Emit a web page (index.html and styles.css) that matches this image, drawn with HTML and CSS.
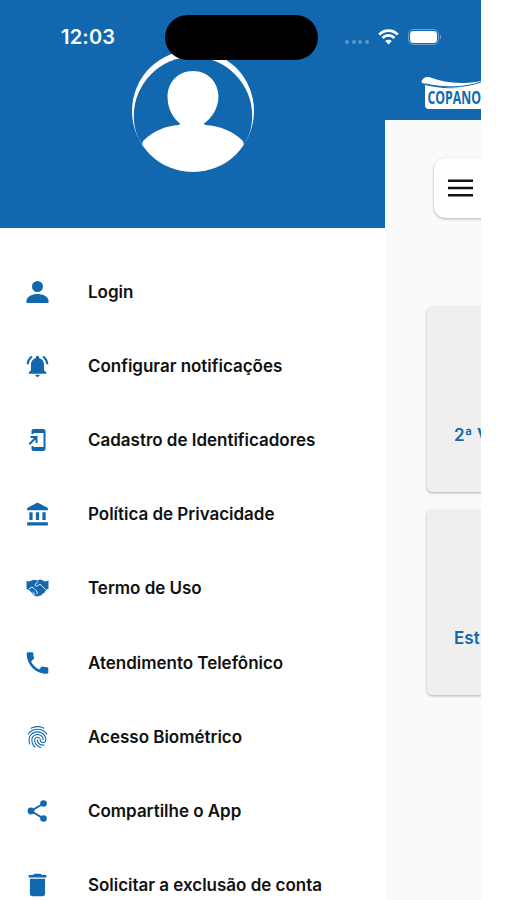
FILE: index.html
```html
<!DOCTYPE html>
<html lang="pt-BR">
<head>
    <meta charset="UTF-8">
    <title>Menu</title>
    <link rel="stylesheet" href="styles.css">
</head>
<body>
    <div class="phone">
        <!-- Drawer -->
        <aside class="drawer">
            <header class="drawer-header">
                <svg class="avatar" viewBox="0 0 124 124">
                    <defs>
                        <clipPath id="avatar-clip"><circle cx="62" cy="62" r="61"/></clipPath>
                    </defs>
                    <circle cx="62" cy="62" r="61" fill="#fff"/>
                    <circle cx="62" cy="67" r="59.200" fill="#1168ae" clip-path="url(#avatar-clip)"/>
                    <g fill="#fff" clip-path="url(#avatar-clip)">
                        <path d="M62 22 C77 22 87 33 87.500 47 C87.500 59 81 69 73 74.500 L74 76 C89 77 102 82 112 92 L118 124 H4 L12 92 C22 82 34 77 48 76 L49 74.500 C41 68 36.500 59 36.500 47 C37 33 47 22 62 22 Z"/>
                    </g>
                </svg>
            </header>
            <nav class="menu">
                <a class="menu-item">
                    <svg class="icon" viewBox="0 0 24 24"><circle cx="12" cy="6.500" r="5.500"/><path d="M1 23v-2.200C1 16.500 7 14 12 14s11 2.500 11 6.800V23z"/></svg>
                    <span>Login</span>
                </a>
                <a class="menu-item">
                    <svg class="icon" viewBox="1 1 22 22"><path d="M7.580 4.080L6.150 2.650C3.750 4.480 2.170 7.300 2.030 10.500h2c.15-2.650 1.510-4.970 3.550-6.420zm12.390 6.420h2c-.15-3.200-1.730-6.020-4.120-7.850l-1.420 1.430c2.020 1.450 3.390 3.770 3.540 6.420zM18 11c0-3.070-1.640-5.640-4.500-6.320V4c0-.83-.67-1.500-1.500-1.500s-1.500.67-1.500 1.500v.68C7.630 5.360 6 7.920 6 11v5l-2 2v1h16v-1l-2-2v-5zm-6 11c.14 0 .27-.01.4-.04.65-.14 1.180-.58 1.440-1.180.1-.24.15-.5.15-.78h-4c.01 1.100.9 2 2.010 2z"/></svg>
                    <span>Configurar notificações</span>
                </a>
                <a class="menu-item">
                    <svg class="icon" viewBox="0 0 24 24"><path d="M18 1.010L8 1c-1.100 0-2 .9-2 2v3h2V5h10v14H8v-1H6v3c0 1.100.9 2 2 2h10c1.100 0 2-.9 2-2V3c0-1.100-.9-1.990-2-1.990zM10 15h2V8H5v2h3.590L3 15.590 4.410 17 10 11.410V15z"/></svg>
                    <span>Cadastro de Identificadores</span>
                </a>
                <a class="menu-item">
                    <svg class="icon" viewBox="0.500 0.500 22 22"><path d="M4 10v7h3v-7H4zm6 0v7h3v-7h-3zM2 22h19v-3H2v3zm14-12v7h3v-7h-3zm-4.500-9L2 6v2h19V6l-9.500-5z"/></svg>
                    <span>Política de Privacidade</span>
                </a>
                <a class="menu-item">
                    <svg class="icon" viewBox="0 0 24 24">
                        <path d="M1 5l2.500.6L8 3.800l3.800.6 3-.8 5 1.800L23 4.500v8.300l-2.300.7-1.500 3-2.200 1.200-1.500 1.800-2 .3L12 20.500 9.500 20 5 15.500l-1.800-2H1z"/>
                        <path class="cut" d="M12.500 5.500L9.300 9c.8 1.800 2.700 1.500 5.200-1l5.500 5.500M3.500 13l3-2 2 1.500 2.500 2.500 1 3M7 16l3 2.500"/>
                    </svg>
                    <span>Termo de Uso</span>
                </a>
                <a class="menu-item">
                    <svg class="icon" viewBox="2 2 20 20"><path d="M6.620 10.790c1.440 2.830 3.760 5.140 6.590 6.590l2.200-2.200c.27-.27.67-.36 1.020-.24 1.120.37 2.330.57 3.570.57.55 0 1 .45 1 1V20c0 .55-.45 1-1 1-9.390 0-17-7.610-17-17 0-.55.45-1 1-1h3.500c.55 0 1 .45 1 1 0 1.250.2 2.450.57 3.570.11.35.03.74-.25 1.020l-2.200 2.200z"/></svg>
                    <span>Atendimento Telefônico</span>
                </a>
                <a class="menu-item">
                    <svg class="icon" viewBox="1 1 22 22"><path d="M17.810 4.470c-.08 0-.16-.02-.23-.06C15.660 3.420 14 3 12.010 3c-1.980 0-3.860.47-5.570 1.410-.24.13-.54.04-.68-.2-.13-.24-.04-.55.2-.68C7.820 2.520 9.860 2 12.010 2c2.130 0 3.990.47 6.030 1.520.25.13.34.43.21.67-.09.18-.26.28-.44.28zM3.500 9.720c-.1 0-.2-.03-.29-.09-.23-.16-.28-.47-.12-.7.99-1.400 2.250-2.500 3.750-3.270C9.980 4.040 14 4.030 17.150 5.650c1.500.77 2.760 1.860 3.750 3.250.16.22.11.54-.12.7-.23.16-.54.11-.7-.12-.9-1.260-2.040-2.250-3.390-2.940-2.870-1.470-6.540-1.470-9.400.01-1.360.7-2.500 1.700-3.400 2.960-.08.14-.23.21-.39.21zm6.250 12.070c-.13 0-.26-.05-.35-.15-.87-.87-1.340-1.430-2.010-2.640-.69-1.230-1.050-2.730-1.050-4.340 0-2.970 2.540-5.390 5.660-5.390s5.660 2.420 5.660 5.390c0 .28-.22.5-.5.5s-.5-.22-.5-.5c0-2.420-2.090-4.390-4.660-4.390-2.570 0-4.660 1.970-4.660 4.390 0 1.440.32 2.770.93 3.850.64 1.150 1.080 1.640 1.850 2.420.19.2.19.51 0 .71-.11.1-.24.15-.37.15zm7.170-1.850c-1.190 0-2.240-.3-3.100-.89-1.490-1.010-2.380-2.650-2.380-4.390 0-.28.22-.5.5-.5s.5.22.5.5c0 1.410.72 2.740 1.940 3.560.71.48 1.540.71 2.540.71.24 0 .64-.03 1.040-.1.27-.05.53.13.58.41.05.27-.13.53-.41.58-.57.11-1.070.12-1.210.12zM14.910 22c-.04 0-.09-.01-.13-.02-1.590-.44-2.630-1.030-3.720-2.100-1.400-1.390-2.170-3.240-2.170-5.220 0-1.620 1.380-2.940 3.080-2.940 1.700 0 3.080 1.320 3.080 2.940 0 1.070.93 1.940 2.080 1.940s2.080-.87 2.080-1.940c0-3.770-3.250-6.830-7.250-6.830-2.840 0-5.440 1.580-6.610 4.030-.39.81-.59 1.760-.59 2.800 0 .78.07 2.010.67 3.610.1.26-.03.55-.29.64-.26.1-.55-.04-.64-.29-.49-1.310-.73-2.610-.73-3.960 0-1.200.23-2.290.68-3.240 1.330-2.790 4.280-4.600 7.510-4.600 4.550 0 8.250 3.510 8.250 7.830 0 1.620-1.380 2.940-3.080 2.940s-3.080-1.320-3.080-2.940c0-1.070-.93-1.940-2.080-1.940s-2.080.87-2.080 1.940c0 1.710.66 3.310 1.870 4.510.95.94 1.860 1.460 3.270 1.850.27.07.42.35.35.61-.05.23-.26.38-.47.38z"/></svg>
                    <span>Acesso Biométrico</span>
                </a>
                <a class="menu-item">
                    <svg class="icon" viewBox="0 0 24 24">
                        <path class="link" d="M18 4.500L5.500 12L18 19.500"/>
                        <circle cx="18" cy="4.500" r="3.300"/>
                        <circle cx="5.500" cy="12" r="3.400"/>
                        <circle cx="18" cy="19.500" r="3.300"/>
                    </svg>
                    <span>Compartilhe o App</span>
                </a>
                <a class="menu-item">
                    <svg class="icon" viewBox="2.500 2.500 19 19"><path d="M6 19c0 1.100.9 2 2 2h8c1.100 0 2-.9 2-2V7H6v12zM19 4h-3.500l-1-1h-5l-1 1H5v2h14V4z"/></svg>
                    <span>Solicitar a exclusão de conta</span>
                </a>
            </nav>
        </aside>

        <!-- Page behind the drawer -->
        <main class="page">
            <header class="page-header">
                <svg class="logo" viewBox="0 0 80 36">
                    <path d="M.5 6.500 C1 2.500 4 .5 8 1 C24 7 42 9 62 4.500 V10 C42 14 20 11 4 8z" fill="#fff"/>
                    <path d="M4 9 C20 13 42 14 62 7 V33 H8 Q4 33 4 29z" fill="#fff"/>
                    <path d="M4 7.800 C22 12 42 12.500 62 5.500" fill="none" stroke="#1168ae" stroke-width="1"/>
                    <text x="6.500" y="28" textLength="53.500" lengthAdjust="spacingAndGlyphs">COPANO</text>
                </svg>
            </header>
            <div class="toolbar">
                <svg class="burger" viewBox="0 0 25 18"><path d="M0 1.700H25M0 9H25M0 16.300H25"/></svg>
            </div>
            <div class="card"><span>2ª V</span></div>
            <div class="card"><span>Est</span></div>
        </main>

        <!-- Status bar -->
        <div class="status-bar">
            <span class="time">12:03</span>
            <span class="island"></span>
            <span class="signal"><i></i><i></i><i></i><i></i></span>
            <svg class="wifi" viewBox="0 0 22 16">
                <path d="M1.300 5.500 A13.500 13.500 0 0 1 20.700 5.500 M4.800 9 A8.500 8.500 0 0 1 17.200 9" fill="none" stroke="#fff" stroke-width="2.900"/>
                <path d="M11 15.800 L7.500 12.300 A5 5 0 0 1 14.500 12.300 Z" fill="#fff"/>
            </svg>
            <svg class="battery" viewBox="0 0 34 16">
                <rect x="0.500" y="0.500" width="30" height="15" rx="5" fill="none" stroke="#6fa4ce"/>
                <rect x="2" y="2" width="27" height="12" rx="3.500" fill="#fff"/>
                <path d="M32 5.500 Q34.500 8 32 10.500z" fill="#6fa4ce"/>
            </svg>
        </div>
    </div>
</body>
</html>
```
FILE: styles.css
```css
body {
    margin: 0;
    background: #fff;
    font-family: Inter, "Liberation Sans", sans-serif;
    overflow: hidden;
}
.phone {
    position: relative;
    display: flex;
    width: 481px;
    height: 900px;
    overflow: hidden;
}
.drawer {
    flex: none;
    width: 385px;
    background: #fff;
}
.drawer-header {
    display: flex;
    justify-content: center;
    align-items: flex-start;
    box-sizing: border-box;
    height: 228px;
    padding-top: 49px;
    background: #1168ae;
}
.avatar {
    width: 124px;
    height: 124px;
}
.menu {
    display: flex;
    flex-direction: column;
    padding: 27px 0 0 25px;
}
.menu-item {
    display: flex;
    align-items: center;
    flex: none;
    gap: 38px;
    height: 74.1px;
    color: #111;
    font-size: 17px;
    font-weight: 600;
    letter-spacing: -0.02px;
    white-space: nowrap;
}
.icon {
    width: 25px;
    height: 24px;
    fill: #1168ae;
}
.icon .cut {
    fill: none;
    stroke: #fff;
    stroke-width: 0.9;
}
.icon .link {
    fill: none;
    stroke: #1168ae;
    stroke-width: 2;
}
.page {
    flex: 1;
    min-width: 0;
    overflow: hidden;
    background: #fafafa;
}
.page-header {
    box-sizing: border-box;
    height: 120px;
    padding: 76px 0 0 36px;
    background: #1168ae;
}
.logo {
    display: block;
    width: 80px;
    height: 36px;
}
.logo text {
    fill: #1168ae;
    font: 700 17px "Open Sans", sans-serif;
}
.toolbar {
    display: flex;
    align-items: center;
    box-sizing: border-box;
    width: 400px;
    height: 60px;
    margin: 38px 0 89px 49px;
    padding: 0 0 1px 14px;
    border-radius: 12px;
    background: #fff;
    box-shadow: 0 1px 3px rgba(0, 0, 0, 0.3);
}
.burger {
    width: 25px;
    height: 18px;
    stroke: #111;
    stroke-width: 2.5;
}
.card {
    display: flex;
    align-items: flex-end;
    box-sizing: border-box;
    width: 180px;
    height: 185px;
    margin: 0 0 18px 42px;
    padding: 0 0 47px 27px;
    border-radius: 5px;
    background: #efefef;
    box-shadow: 0 1px 3px rgba(0, 0, 0, 0.3);
    color: #1168ae;
    font-size: 17px;
    font-weight: 600;
    white-space: nowrap;
}
.status-bar {
    position: absolute;
    top: 14px;
    left: 0;
    display: flex;
    align-items: center;
    width: 481px;
    height: 46px;
}
.time {
    width: 104px;
    padding-left: 61px;
    color: #fff;
    font-size: 20px;
    font-weight: 600;
    letter-spacing: 0.2px;
}
.island {
    width: 153px;
    height: 45px;
    border-radius: 23px;
    background: #000;
}
.signal {
    display: flex;
    gap: 2.5px;
    padding: 10px 0 0 27px;
}
.signal i {
    width: 4px;
    height: 4px;
    border-radius: 50%;
    background: #5c96c7;
}
.wifi {
    width: 21px;
    height: 16px;
    margin-left: 9px;
}
.battery {
    width: 34px;
    height: 16px;
    margin-left: 9px;
}
```
